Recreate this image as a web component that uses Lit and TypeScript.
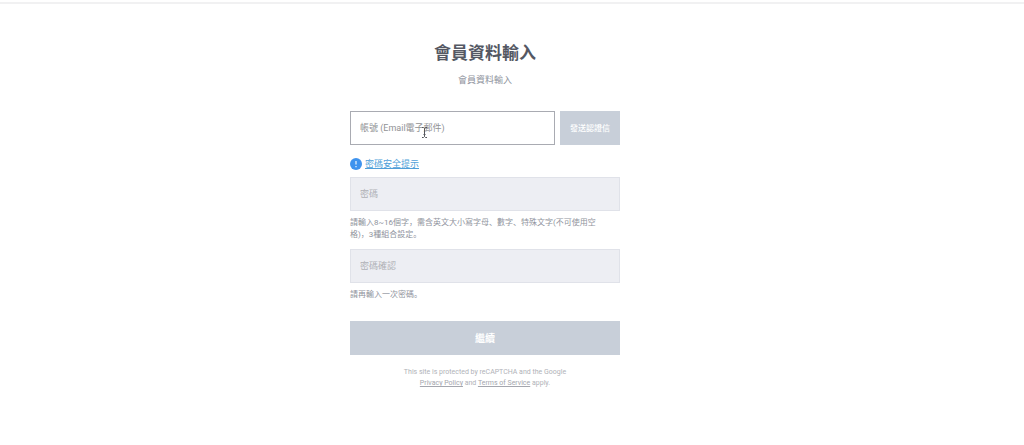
import { LitElement, html, css } from "lit";
import { customElement } from "lit/decorators.js";

@customElement("app-root")
export class AppRoot extends LitElement {
  static styles = css`
    :host {
      display: block;
      font-family: Roboto, "Noto Sans CJK SC", sans-serif;
      color: #8f939d;
      background: #fff;
    }
    * {
      box-sizing: border-box;
    }
    .topbar {
      height: 4px;
      border-bottom: 2px solid #f1f1f2;
    }
    .page {
      display: flex;
      justify-content: center;
      padding: 37px 54px 48px 0;
    }
    .form {
      width: 100%;
      max-width: 270px;
      display: flex;
      flex-direction: column;
    }
    h1 {
      margin: 0;
      font-size: 17px;
      line-height: 24px;
      font-weight: 700;
      text-align: center;
      color: #545863;
    }
    .subtitle {
      margin: 7px 0 23px;
      font-size: 9px;
      line-height: 16px;
      text-align: center;
      color: #8f939d;
    }
    .account {
      display: flex;
      gap: 5px;
      position: relative;
    }
    .field {
      width: 100%;
      min-width: 0;
      height: 34px;
      margin: 0;
      padding: 0 9px;
      border: 1px solid #e0e2e9;
      border-radius: 0;
      outline: none;
      background: #edeef3;
      font: 9px/16px Roboto, "Noto Sans CJK SC", sans-serif;
      color: #545863;
    }
    .field::placeholder {
      color: #b0b1b6;
      opacity: 1;
    }
    .field.active {
      flex: 1;
      border: 1px solid #a9abb2;
      background: #fff;
    }
    .field.active::placeholder {
      color: #919295;
    }
    .pointer {
      position: absolute;
      left: 71px;
      top: 16px;
      width: 7px;
      height: 11px;
      pointer-events: none;
    }
    button {
      height: 34px;
      margin: 0;
      padding: 0 0 2px;
      border: 0;
      background: #c8cfd9;
      color: #fff;
      font-family: inherit;
    }
    .send {
      width: 60px;
      font-size: 8px;
      font-weight: 500;
    }
    .submit {
      font-size: 10px;
      font-weight: 700;
      margin-top: 20px;
    }
    .tip {
      display: flex;
      align-items: center;
      gap: 3px;
      margin: 11px 0 5px;
      height: 16px;
      font-size: 9px;
      line-height: 16px;
    }
    .tip svg {
      width: 12px;
      height: 12px;
    }
    .tip a {
      color: #4f9fd9;
    }
    .hint {
      margin: 6px 0 8px;
      font-size: 8px;
      line-height: 12px;
      color: #8f939d;
    }
    .hint.last {
      margin-bottom: 0;
    }
    .legal {
      margin: 12px 0 0;
      font-size: 7px;
      line-height: 11px;
      text-align: center;
      color: #b0b2b8;
    }
    .legal a {
      color: #a4a6ae;
    }
  `;

  render() {
    return html`
      <header class="topbar"></header>
      <main class="page">
        <form class="form" @submit=${(e: Event) => e.preventDefault()}>
          <h1>會員資料輸入</h1>
          <p class="subtitle">會員資料輸入</p>
          <div class="account">
            <input class="field active" type="email" aria-label="帳號 (Email電子郵件)" placeholder="帳號 (Email電子郵件)" />
            <button class="send" type="button">發送認證信</button>
            <svg class="pointer" viewBox="0 0 7 11" fill="none" stroke="#55575c" aria-hidden="true">
              <path d="M1 .5h1.5l1 1 1-1H6M3.5 1.500v8M1 10.500h1.500l1-1 1 1H6M2.500 7.500h2" />
            </svg>
          </div>
          <div class="tip">
            <svg viewBox="0 0 12 12" aria-hidden="true">
              <circle cx="6" cy="6" r="6" fill="#3f93ee" />
              <path d="M6 3v3.600M6 8v1.200" stroke="#fff" stroke-width="1.100" />
            </svg>
            <a href="#">密碼安全提示</a>
          </div>
          <input class="field" type="password" aria-label="密碼" placeholder="密碼" aria-describedby="rule" />
          <p class="hint" id="rule">請輸入8~16個字，需含英文大小寫字母、數字、特殊文字(不可使用空<br />格)，3種組合設定。</p>
          <input class="field" type="password" aria-label="密碼確認" placeholder="密碼確認" aria-describedby="again" />
          <p class="hint last" id="again">請再輸入一次密碼。</p>
          <button class="submit" type="submit">繼續</button>
          <p class="legal">
            This site is protected by reCAPTCHA and the Google<br />
            <a href="#">Privacy Policy</a> and <a href="#">Terms of Service</a> apply.
          </p>
        </form>
      </main>
    `;
  }
}
